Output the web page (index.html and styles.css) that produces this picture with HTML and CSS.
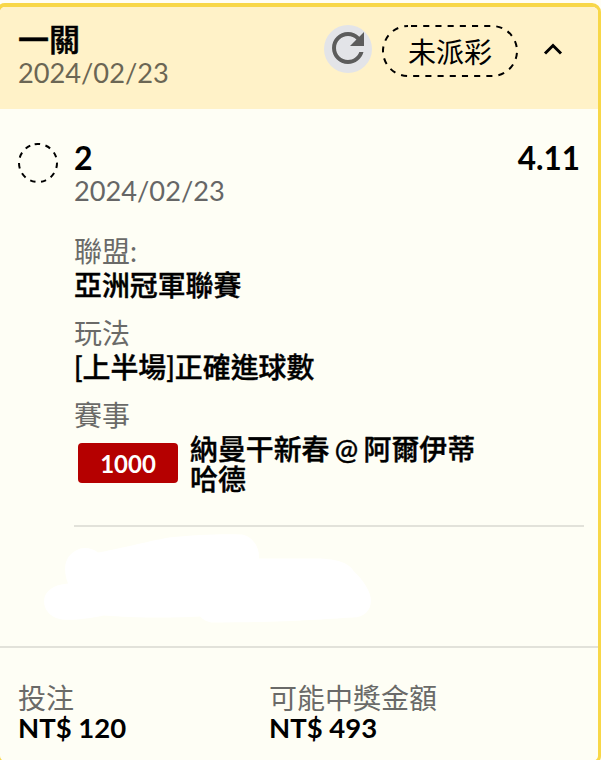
FILE: index.html
```html
<!DOCTYPE html>
<html lang="zh-Hant">
<head>
  <meta charset="UTF-8" />
  <meta name="viewport" content="width=device-width, initial-scale=1.0"/>
  <title>投注紀錄</title>
  <link rel="stylesheet" href="styles.css">
</head>
<body>

<div class="ticket">
  <div class="ticket-header">
    <div class="header-info">
      <h2>一關</h2>
      <p class="date">2024/02/23</p>
    </div>
    <button class="refresh">
      <svg width="48" height="48" viewBox="0 0.5 24 24">
        <path d="M17.65 6.35C16.2 4.9 14.21 4 12 4c-4.42 0-7.99 3.58-7.99 8s3.57 8 7.99 8c3.73 0 6.84-2.55 7.73-6h-2.08c-.82 2.33-3.04 4-5.65 4-3.31 0-6-2.69-6-6s2.69-6 6-6c1.66 0 3.14.69 4.22 1.78L13 11h7V4l-2.35 2.35z" fill="#5c5c5c"/>
      </svg>
    </button>
    <div class="status">
      <svg class="status-outline" width="136" height="52" viewBox="0 0 136 52">
        <rect x="1" y="1" width="134" height="50" rx="25" fill="none" stroke="#000" stroke-width="2" stroke-dasharray="6.1 6.1" stroke-dashoffset="-3"/>
      </svg>
      <span>未派彩</span>
    </div>
    <button class="toggle">
      <svg width="20" height="14" viewBox="0 0 20 14">
        <path d="M2 11.5L10 3.5L18 11.5" fill="none" stroke="#000" stroke-width="3"/>
      </svg>
    </button>
  </div>

  <div class="bet">
    <svg class="bet-icon" width="40" height="40" viewBox="0 0 40 40">
      <circle cx="20" cy="20" r="19" fill="none" stroke="#000" stroke-width="2" stroke-dasharray="5.4 5.45" stroke-dashoffset="-4" transform="rotate(-112 20 20)"/>
    </svg>
    <div class="bet-details">
      <div class="bet-title">
        <h3>2</h3>
        <span class="odds">4.11</span>
      </div>
      <p class="date">2024/02/23</p>

      <div class="field">
        <p class="label">聯盟:</p>
        <p class="value">亞洲冠軍聯賽</p>
      </div>
      <div class="field">
        <p class="label">玩法</p>
        <p class="value">[上半場]正確進球數</p>
      </div>
      <div class="field">
        <p class="label">賽事</p>
        <div class="match">
          <span class="match-code">1000</span>
          <p class="match-name">納曼干新春 @ 阿爾伊蒂哈德</p>
        </div>
      </div>
    </div>
  </div>

  <div class="hidden-note">
    <svg width="330" height="92" viewBox="0 0 330 92">
      <path d="M18 62C9 61 0 54 0 44C0 34 9 27 24 26C20 16 18 0 32 -7C38 -11 48 -10 54 -5C72 -8 103 -16 125 -20C150 -23 184 -24 198 -23C208 -21 216 -11 215 1H277C292 2 304 4 310 14C320 23 327 35 327 43C327 53 320 60 309 60C275 62 240 65 167 65C162 64 159 62 156 59C124 61 83 60 60 58C44 61 32 63 18 62Z" transform="translate(0 23.5)" fill="#fff"/>
    </svg>
  </div>

  <div class="totals">
    <div class="total">
      <p class="label">投注</p>
      <p class="amount">NT$ 120</p>
    </div>
    <div class="total">
      <p class="label">可能中獎金額</p>
      <p class="amount">NT$ 493</p>
    </div>
  </div>
</div>

</body>
</html>
```

FILE: styles.css
```css
* {
  box-sizing: border-box;
}
body {
  margin: 0;
  height: 760px;
  overflow: hidden;
  background: #fffef5;
  color: #000;
  font-family: Lato, "Noto Sans CJK TC", sans-serif;
  font-size: 28px;
}
h2, h3, p {
  margin: 0;
}
button {
  padding: 0;
  border: none;
  background: none;
  display: flex;
  align-items: center;
  justify-content: center;
}
svg {
  display: block;
}
.ticket {
  width: 605px;
  height: 762px;
  margin: 3px 0 0 -4px;
  border: 4px solid #f8d748;
  border-right-width: 3px;
  border-radius: 9px;
  background: #fefef5;
  overflow: hidden;
}
.ticket-header {
  display: flex;
  height: 102px;
  padding: 18px 35px 0 18px;
  background: #fff2c8;
}
.header-info {
  flex: 1;
}
h2 {
  font-size: 31px;
  line-height: 28px;
  font-weight: 500;
  -webkit-text-stroke: 0.5px #000;
}
.date {
  color: #666;
  font-size: 27.2px;
  line-height: 34px;
}
.ticket-header .date {
  color: #6b6654;
  line-height: 40px;
}
.refresh {
  width: 48px;
  height: 48px;
  border-radius: 50%;
  background: #e3e4e8;
  margin-right: 10px;
}
.status {
  position: relative;
  width: 136px;
  height: 52px;
  line-height: 54px;
  text-align: center;
  margin-right: 25px;
}
.status-outline {
  position: absolute;
  left: 0;
  top: 0;
}
.toggle {
  height: 48px;
}
.bet {
  display: flex;
  padding: 34px 14px 0 18px;
}
.bet-icon {
  margin-right: 16px;
}
.bet-details {
  flex: 1;
  height: 384px;
  border-bottom: 2px solid #e2e2da;
}
.bet-title {
  display: flex;
  justify-content: space-between;
  padding-right: 4px;
  font-size: 32px;
  line-height: 30px;
  font-weight: bold;
}
.bet-title h3 {
  font-size: 32px;
}
.odds {
  font-size: 31.5px;
}
.bet-details > .date {
  margin: 1px 0 26px;
}
.field {
  line-height: 34px;
  margin-bottom: 14px;
}
.label {
  color: #6a6a68;
}
.value, .match-name {
  font-weight: 500;
  font-size: 27.9px;
  -webkit-text-stroke: 0.4px #000;
}
.match {
  display: flex;
}
.match-code {
  width: 100px;
  height: 40px;
  margin: 11px 12px 0 4px;
  border-radius: 4px;
  background: #b50000;
  color: #fff;
  font-size: 24px;
  line-height: 41px;
  font-weight: bold;
  text-align: center;
}
.match-name {
  width: 290px;
  padding-top: 2px;
  line-height: 30px;
  word-spacing: -1.7px;
}
.hidden-note {
  height: 119px;
  padding: 7px 0 0 44px;
}
.totals {
  display: flex;
  border-top: 2px solid #e2e2da;
  padding: 34px 18px 0;
}
.total {
  width: 251px;
  line-height: 32px;
}
.amount {
  font-size: 27.5px;
  font-weight: bold;
  line-height: 27px;
}
```
